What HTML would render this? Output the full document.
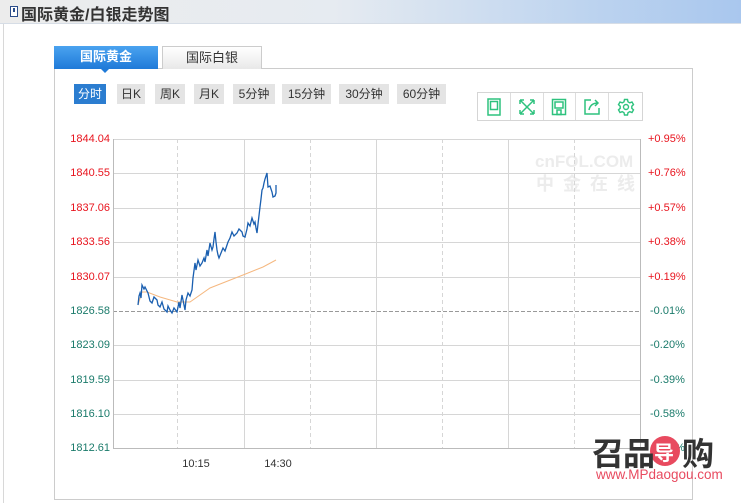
<!DOCTYPE html>
<html><head><meta charset="utf-8"><style>
*{margin:0;padding:0;box-sizing:border-box}
body{width:741px;height:503px;background:#fff;font-family:"Liberation Sans","Noto Sans CJK SC",sans-serif;position:relative;overflow:hidden}
.hdr{position:absolute;left:0;top:0;width:741px;height:24px;background:linear-gradient(90deg,#ececec 0%,#e6ebf1 45%,#bcd3ef 80%,#a9c7ee 100%);border-bottom:1px solid #d6dde6}
.hdr .ic{position:absolute;left:10px;top:6px;width:8px;height:11px;border:1px solid #2a4c8a;background:#fff}
.hdr .ic:after{content:"";position:absolute;left:2px;top:1px;width:2px;height:4px;background:#2a4c8a}
.hdr span{position:absolute;left:21px;top:1px;font-size:16px;font-weight:bold;color:#333}
.lb{position:absolute;left:3px;top:24px;width:1px;height:479px;background:#d8d8d8}
.box{position:absolute;left:54px;top:68px;width:639px;height:432px;border:1px solid #ccc}
.tab{position:absolute;top:46px;height:23px;font-size:13px;text-align:center;line-height:22px}
.t1{left:54px;width:104px;background:linear-gradient(#4aa3f0,#1f7ad8);color:#fff;font-weight:bold}
.t1:after{content:"";position:absolute;left:47px;top:23px;border:4px solid transparent;border-top:4px solid #1f7ad8}
.t2{left:162px;width:100px;background:linear-gradient(#fff,#e8e8e8);border:1px solid #ccc;border-bottom:none;color:#333}
.btn{position:absolute;top:84px;height:20px;background:#e4e4e4;font-size:12px;line-height:20px;text-align:center;color:#333}
.btn.on{background:#2b7dd0;color:#fff}
.tools{position:absolute;left:477px;top:92px;width:166px;height:29px;border:1px solid #d5d5d5;display:flex}
.tools div{width:33px;height:27px;border-right:1px solid #ddd;display:flex;align-items:center;justify-content:center}
.tools div:last-child{border-right:none}
</style></head><body>
<div class="hdr"><div class="ic"></div><span>国际黄金/白银走势图</span></div>
<div class="lb"></div>
<div class="box"></div>
<div class="tab t1">国际黄金</div><div class="tab t2">国际白银</div>
<div class="btn on" style="left:74px;width:32px">分时</div>
<div class="btn" style="left:117px;width:28px">日K</div>
<div class="btn" style="left:155px;width:30px">周K</div>
<div class="btn" style="left:194px;width:30px">月K</div>
<div class="btn" style="left:233px;width:42px">5分钟</div>
<div class="btn" style="left:282px;width:49px">15分钟</div>
<div class="btn" style="left:339px;width:50px">30分钟</div>
<div class="btn" style="left:397px;width:49px">60分钟</div>
<div class="tools">
<div><svg width="16" height="18" fill="none" stroke="#2ec27e" stroke-width="1.5"><rect x="2" y="1" width="12" height="16"/><rect x="4.5" y="3.5" width="7" height="8"/></svg></div>
<div><svg width="18" height="18" fill="none" stroke="#2ec27e" stroke-width="1.5"><path d="M2 2L16 16M16 2L2 16M2 2h4M2 2v4M16 2h-4M16 2v4M2 16h4M2 16v-4M16 16h-4M16 16v-4"/></svg></div>
<div><svg width="16" height="18" fill="none" stroke="#2ec27e" stroke-width="1.5"><rect x="1.5" y="1.5" width="13" height="15"/><rect x="4" y="4" width="8" height="6"/><rect x="6" y="12" width="4" height="4.5"/></svg></div>
<div><svg width="18" height="18" fill="none" stroke="#2ec27e" stroke-width="1.5"><path d="M8 2H2v14h14v-6M6 12c1-5 4-7 9-7M12 2l3 3-3 3"/></svg></div>
<div><svg width="18" height="18" fill="none" stroke="#2ec27e" stroke-width="1.4"><path d="M7.5 1.5h3l.5 2.3 1.8 1 2.2-.8 1.5 2.6-1.7 1.6v2.1l1.7 1.6-1.5 2.6-2.2-.8-1.8 1-.5 2.3h-3l-.5-2.3-1.8-1-2.2.8-1.5-2.6 1.7-1.6V8.2L1.5 6.6 3 4l2.2.8 1.8-1z"/><circle cx="9" cy="9" r="2.5"/></svg></div>
</div>
<svg style="position:absolute;left:0;top:0" width="741" height="503">
<g fill="#ececec" font-weight="bold" font-family="Liberation Sans,sans-serif"><text x="535" y="167" font-size="17">cnFOL.COM</text><text x="536" y="190" font-size="18" font-family="Noto Sans CJK SC" letter-spacing="9">中金在线</text></g>
<g stroke="#d6d6d6" stroke-width="1">
<path d="M113 173.5H640M113 208.5H640M113 242.5H640M113 277.5H640M113 345.5H640M113 380.5H640M113 414.5H640M113 139.5H640"/>
<path d="M244.5 139V448M376.5 139V448M508.5 139V448"/>
<path d="M177.5 139V448M310.5 139V448M442.5 139V448M574.5 139V448" stroke-dasharray="4,3"/>
</g>
<path d="M113 311.5H640" stroke="#999" stroke-dasharray="4,2"/>
<path d="M113.5 139V448.5H640M640.5 139V448" stroke="#bbb" fill="none"/>
<polyline fill="none" stroke="#f5b880" stroke-width="1" points="138,305 142,292 147,292 160,297 177,302 190,302 210,288 243,275 263,267 276,260"/>
<polyline fill="none" stroke="#1a5fb0" stroke-width="1.3" points="138,305 139,296 140,293 141,298 142,285 144,289 145,287 147,291 148,293 150,301 152,303 154,297 157,300 158,305 160,307 162,302 164,309 167,312 168,306 170,310 172,313 174,308 177,312 179,302 180,308 182,295 183,300 185,310 186,300 188,293 190,296 192,290 193,278 195,263 196,270 198,260 200,266 202,263 204,258 205,262 207,250 208,256 210,243 212,250 213,247 214,239 215,232 216,242 217,250 218,255 219,258 221,253 223,248 225,251 228,242 230,238 232,232 234,236 237,233 239,229 242,232 243,236 245,237 247,229 248,223 250,226 252,218 254,224 255,222 256,228 257,233 258,224 260,207 261,199 262,190 263,188 264,183 265,179 267,173 268,187 270,186 272,192 273,197 275,196 276,193 276,185"/>
<g font-size="11" font-family="Liberation Sans,sans-serif">
<text x="110" y="142" text-anchor="end" fill="#e8141e">1844.04</text>
<text x="110" y="176" text-anchor="end" fill="#e8141e">1840.55</text>
<text x="110" y="211" text-anchor="end" fill="#e8141e">1837.06</text>
<text x="110" y="245" text-anchor="end" fill="#e8141e">1833.56</text>
<text x="110" y="280" text-anchor="end" fill="#e8141e">1830.07</text>
<text x="110" y="314" text-anchor="end" fill="#1b7b6b">1826.58</text>
<text x="110" y="348" text-anchor="end" fill="#1b7b6b">1823.09</text>
<text x="110" y="383" text-anchor="end" fill="#1b7b6b">1819.59</text>
<text x="110" y="417" text-anchor="end" fill="#1b7b6b">1816.10</text>
<text x="110" y="451" text-anchor="end" fill="#1b7b6b">1812.61</text>
<text x="648" y="142" fill="#e8141e">+0.95%</text>
<text x="648" y="176" fill="#e8141e">+0.76%</text>
<text x="648" y="211" fill="#e8141e">+0.57%</text>
<text x="648" y="245" fill="#e8141e">+0.38%</text>
<text x="648" y="280" fill="#e8141e">+0.19%</text>
<text x="650" y="314" fill="#1b7b6b">-0.01%</text>
<text x="650" y="348" fill="#1b7b6b">-0.20%</text>
<text x="650" y="383" fill="#1b7b6b">-0.39%</text>
<text x="650" y="417" fill="#1b7b6b">-0.58%</text>
<text x="650" y="451" fill="#1b7b6b">-0.77%</text>
<text x="196" y="467" text-anchor="middle" fill="#333">10:15</text>
<text x="278" y="467" text-anchor="middle" fill="#333">14:30</text>
</g>
<circle cx="665" cy="451" r="15" fill="#e84a5f"/>
<g font-family="Noto Sans CJK SC,sans-serif" font-weight="bold" font-size="32">
<text x="592" y="465" fill="#333" letter-spacing="-1">召品</text>
<text x="654" y="460" fill="#fff" font-size="20">导</text>
<text x="682" y="465" fill="#333">购</text>
</g>
<text x="596" y="479" font-size="13.5" fill="#e84a5f" font-family="Liberation Sans,sans-serif">www.MPdaogou.com</text>
</svg>
</body></html>
